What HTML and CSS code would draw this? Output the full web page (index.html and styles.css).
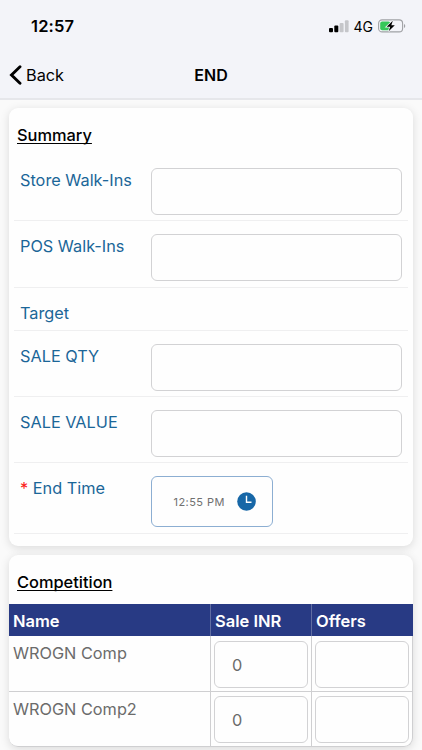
FILE: index.html
```html
<!DOCTYPE html>
<html lang="en">
<head>
<meta charset="utf-8">
<title>END</title>
<link rel="stylesheet" href="styles.css">
</head>
<body>
<header class="top">
  <div class="status">
    <span class="clock">12:57</span>
    <svg class="signal" width="20" height="13" viewBox="0 0 20 13"><rect x="0" y="8" width="4" height="4.3" rx="1"/><rect x="5.3" y="5.5" width="4" height="6.8" rx="1"/><rect x="10.6" y="3" width="4" height="9.3" rx="1" fill="#c5c6ca"/><rect x="15.9" y="0.3" width="3.7" height="12" rx="1" fill="#c5c6ca"/></svg>
    <span class="network">4G</span>
    <svg class="battery" width="28" height="14" viewBox="0 0 28 14"><rect x=".6" y=".9" width="24" height="12" rx="3.5" fill="none" stroke="#a0a1a5" stroke-width="1.1"/><rect x="2.2" y="2.5" width="10.2" height="8.8" rx="2" fill="#36c759"/><path d="M26 5v4c1.7-.6 1.7-3.4 0-4Z" fill="#a0a1a5"/><path d="M14.8 1.8 8.7 7.7h3.5l-1.5 4.6 6.1-6h-3.5Z" stroke="#f3f4f9" stroke-width="1.6"/><path d="M14.8 1.8 8.7 7.7h3.5l-1.5 4.6 6.1-6h-3.5Z"/></svg>
  </div>
  <nav class="nav">
    <a class="back"><svg width="13" height="21" viewBox="0 0 13 21"><path d="M11 1.8 2.5 10 11 18.2" fill="none" stroke="#000" stroke-width="2.9" stroke-linecap="round" stroke-linejoin="miter"/></svg><span>Back</span></a>
    <h1>END</h1>
  </nav>
</header>
<main>
  <section class="card summary">
    <h2><span>Summary</span></h2>
    <div class="row"><label>Store Walk-Ins</label><div class="field"></div></div>
    <div class="row"><label>POS Walk-Ins</label><div class="field"></div></div>
    <div class="row short"><label>Target</label></div>
    <div class="row"><label>SALE QTY</label><div class="field"></div></div>
    <div class="row"><label>SALE VALUE</label><div class="field"></div></div>
    <div class="row last"><label><i>*</i> End Time</label><div class="field time"><span>12:55 PM</span><svg width="19" height="19" viewBox="0 0 19 19"><circle cx="9.5" cy="9.5" r="9.3" fill="#1767a7"/><path d="M9.5 3.8v6.4h5" fill="none" stroke="#fff" stroke-width="1.4"/></svg></div></div>
  </section>
  <section class="card competition">
    <h2><span>Competition</span></h2>
    <div class="table">
      <div class="th">Name</div><div class="th">Sale INR</div><div class="th">Offers</div>
      <div class="td">WROGN Comp</div><div class="td"><div class="field">0</div></div><div class="td"><div class="field"></div></div>
      <div class="td">WROGN Comp2</div><div class="td"><div class="field">0</div></div><div class="td"><div class="field"></div></div>
    </div>
  </section>
</main>
</body>
</html>
```
FILE: styles.css
```css
* { box-sizing: border-box; }
body {
  margin: 0;
  height: 750px;
  overflow: hidden;
  background: #fafafa;
  color: #000;
  font-family: Inter, "Liberation Sans", sans-serif;
  font-size: 16.3px;
}
svg { display: block; flex: none; }
.top {
  height: 100px;
  background: #f3f4f9;
  border-bottom: 2px solid #e6e7eb;
}
.status {
  display: flex;
  align-items: center;
  height: 52px;
  padding: 0 16px 0 31px;
}
.clock { font-size: 16.5px; font-weight: 600; margin-right: auto; letter-spacing: .15px; }
.network { font-size: 14px; font-weight: 400; margin: 0 5px; }
.nav {
  display: grid;
  grid-template-columns: 1fr auto 1fr;
  align-items: center;
  height: 46px;
  padding: 0 9px;
}
.back { display: flex; align-items: center; gap: 4px; font-size: 16.3px; }
h1 { margin: 0; font-size: 16px; font-weight: 600; }
main { padding: 8px 9px 0; }
.card {
  background: #fefefe;
  border-radius: 9px;
  box-shadow: 0 2px 10px rgba(0, 0, 0, .13);
}
.summary { height: 438px; padding: 0 5px; }
h2 {
  margin: 0;
  height: 47px;
  padding: 17px 0 0 3px;
  font-size: 16.4px;
  line-height: 20px;
  font-weight: 500;
  text-decoration: underline;
  text-decoration-thickness: 1px;
  text-underline-offset: 2px;
  text-decoration-skip-ink: none;
}
.row {
  display: grid;
  grid-template-columns: 130.5px 251.5px;
  align-items: start;
  height: 66.3px;
  padding: 13px 0 0 6px;
  border-bottom: 1px solid #efeff0;
}
.row.short { height: 43.3px; }
.row.last { height: 70.3px; }
label { color: #1b6698; line-height: 24px; }
label i { color: #fb2018; font-style: normal; }
.field {
  height: 47px;
  border: 1px solid #d2d2d4;
  border-radius: 6px;
}
.field.time {
  display: flex;
  align-items: center;
  gap: 12px;
  width: 122px;
  height: 50.5px;
  padding-left: 22px;
  border-color: #8caed2;
  color: #707070;
  font-size: 11px;
  letter-spacing: .45px;
}
.competition { height: 192px; margin-top: 9px; }
.competition h2 { height: 49px; padding: 17px 0 0 8px; }
.table {
  display: grid;
  grid-template-columns: 202px 101px 101px;
  grid-template-rows: 32px 56px 55px;
}
.th {
  padding-left: 4px;
  background: #283a84;
  color: #fff;
  font-size: 16.5px;
  font-weight: 600;
  line-height: 34px;
  border-right: 1px solid #606da2;
}
.th:nth-child(3n) { border-right: 0; }
.td {
  padding: 5px 3px 0;
  border-right: 1px solid #cfcfd1;
  border-bottom: 1px solid #cfcfd1;
  color: #6b6b6b;
}
.td:nth-child(3n+1) { padding: 7px 4px 0; line-height: 20px; }
.td:nth-last-child(-n+3) { padding-top: 4px; }
.td:nth-last-child(3) { padding-top: 7px; border-bottom-left-radius: 9px; }
.td:last-child { border-bottom-right-radius: 9px; }
.td .field { width: 94px; padding-left: 17px; line-height: 46px; }
```
